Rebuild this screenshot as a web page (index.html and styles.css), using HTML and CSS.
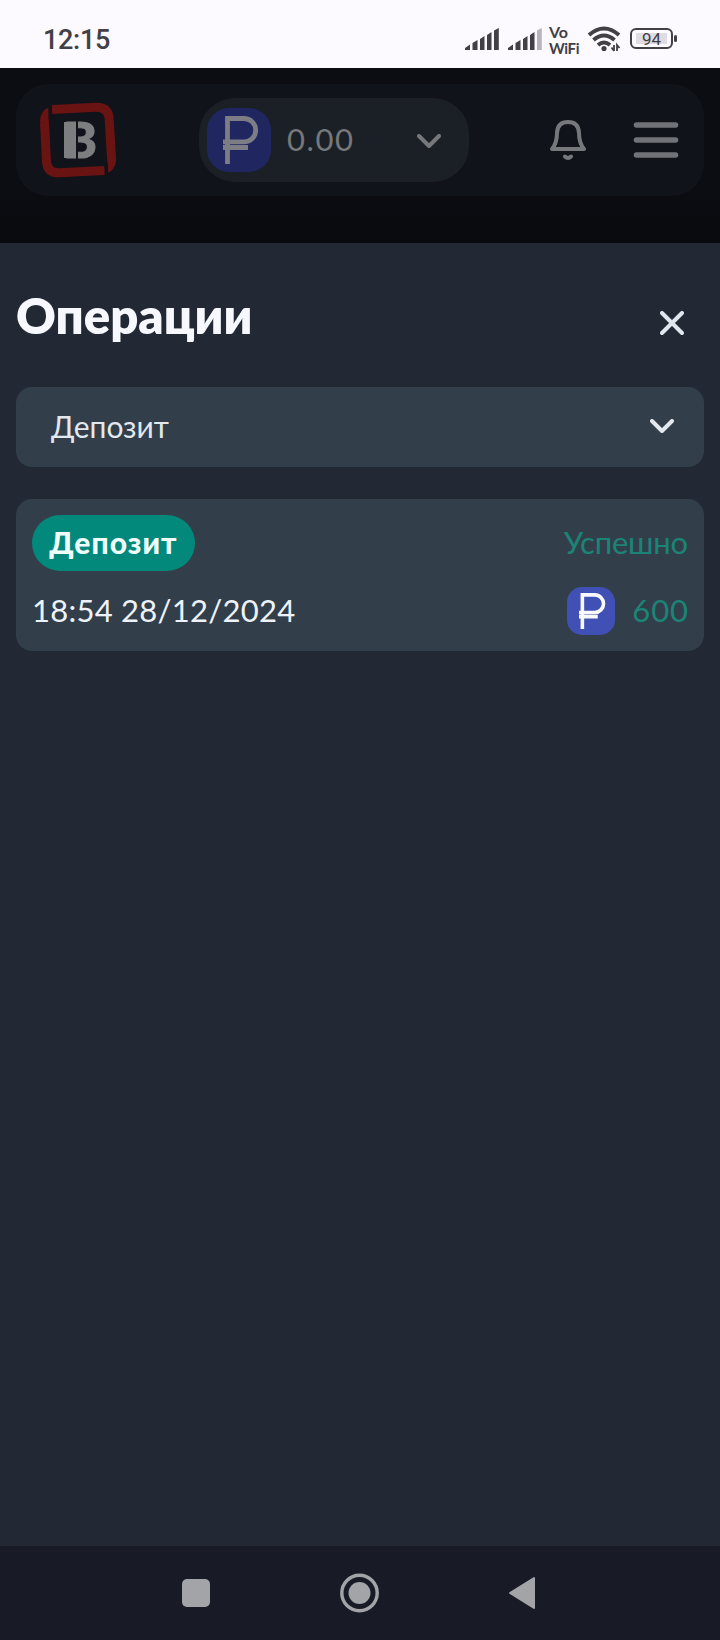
FILE: index.html
```html
<!DOCTYPE html>
<html lang="ru">
<head>
<meta charset="utf-8">
<title>Операции</title>
<link rel="stylesheet" href="styles.css">
</head>
<body>
<svg class="defs" width="0" height="0">
  <symbol id="ruble" viewBox="0 0 64 64">
    <path d="M20.500 56V10.500H37a11.700 11.700 0 0 1 0 23.400H16M16 39.500H41" fill="none" stroke="currentColor" stroke-width="4.800"/>
  </symbol>
  <symbol id="chevron" viewBox="0 0 24 14">
    <path d="M2 2l10 10L22 2" fill="none" stroke="currentColor" stroke-width="4" stroke-linecap="round" stroke-linejoin="round"/>
  </symbol>
</svg>
<div class="phone">
  <div class="status">
    <span class="clock">12:15</span>
    <div class="status-icons">
      <svg class="signal" width="35" height="24" viewBox="0 0 35 24"><path d="M0 22V20L5 16.500V22ZM7.500 22V15L12.500 12V22ZM15 22V11L19.500 8V22ZM22 22V7L26.500 4V22ZM29 22V2.500L33.800 0V22Z"/></svg>
      <svg class="signal signal-2" width="35" height="24" viewBox="0 0 35 24"><path d="M0 22V20L5 16.500V22ZM7.500 22V15L12.500 12V22ZM15 22V11L19.500 8V22ZM22 22V7L26.500 4V22Z"/><path class="faint" d="M29 22V2.500L33.800 0V22Z"/></svg>
      <div class="vowifi"><span>Vo</span><span class="wf">WiFi</span></div>
      <svg class="wifi" width="34" height="26" viewBox="0 0 34 26">
        <g fill="none" stroke="#414045" stroke-width="4"><path d="M2 9Q17-4 32 9M6.500 14Q17 5 27.500 14M11 19Q17 14 23 19"/></g>
        <circle cx="17" cy="22.500" r="2.600" fill="#414045"/><path d="M27 19v6M24.500 21.500L27 25M30 25v-6L32.500 22" fill="none" stroke="#414045" stroke-width="1.800"/>
      </svg>
      <div class="battery"><span class="level">94</span></div>
    </div>
  </div>

  <header class="top">
    <div class="topbar">
      <svg class="logo" width="76" height="76" viewBox="0 0 76 76">
        <g fill="none" stroke="#691313" stroke-width="9">
          <path d="M12 7.600L56 5.200Q68.500 5 69.200 17L71.500 56"/>
          <path d="M64.500 68.400L19 70.800Q7.500 71 6.500 60L4.500 20"/>
        </g>
        <path fill="#691313" d="M0 20Q0 9 8.500 5.500V17L9 20ZM67 56L76 55Q77 66 68 71Z"/>
        <path fill="none" stroke="#10131a" stroke-width="3" d="M10 3L10.500 14M66.300 61L67 74"/>
        <text x="23" y="55.500" class="logo-letter" textLength="34" lengthAdjust="spacingAndGlyphs">B</text>
        <rect x="24" y="20" width="12" height="36" fill="#7d7e80"/>
        <path d="M37 19V57" stroke="#10131a" stroke-width="2"/>
        <circle cx="39.500" cy="31" r="3" fill="#10131a"/><circle cx="41" cy="44.500" r="3" fill="#10131a"/>
      </svg>
      <div class="wallet">
        <svg class="coin coin-dim" width="64" height="64"><use href="#ruble"/></svg>
        <span class="balance">0.00</span>
        <svg class="chev-dim" width="24" height="14"><use href="#chevron"/></svg>
      </div>
      <svg class="bell" width="36" height="41" viewBox="0 0 36 41" fill="none" stroke="#77787c" stroke-width="4" stroke-linecap="round" stroke-linejoin="round">
        <path d="M2 29Q7 23 7 13Q7.500 2 18 2T29 13Q29 23 34 29Z"/><path d="M15 36.500Q18 39.500 21 36.500"/>
      </svg>
      <svg class="menu" width="46" height="38" viewBox="0 0 46 38"><path d="M3.500 4H42.500M3.500 19H42.500M3.500 34H42.500" stroke="#727378" stroke-width="5.600" stroke-linecap="round"/></svg>
    </div>
  </header>

  <main class="sheet">
    <div class="sheet-head">
      <h1 class="title">Операции</h1>
      <svg class="close" width="24" height="24" viewBox="0 0 24 24"><path d="M2 2L22 22M22 2L2 22" stroke="#e2e6ef" stroke-width="4" stroke-linecap="round"/></svg>
    </div>
    <div class="select">
      <span class="select-text">Депозит</span>
      <svg width="24" height="14"><use href="#chevron"/></svg>
    </div>
    <section class="operation">
      <div class="row row-top">
        <span class="badge">Депозит</span>
        <span class="state">Успешно</span>
      </div>
      <div class="row row-bottom">
        <span class="date">18:54 28/12/2024</span>
        <div class="sum">
          <svg class="coin" width="48" height="48"><use href="#ruble"/></svg>
          <span class="amount">600</span>
        </div>
      </div>
    </section>
  </main>

  <nav class="nav">
    <svg width="28" height="28"><rect width="28" height="28" rx="5" fill="#a3a4a8"/></svg>
    <svg width="40" height="40"><circle cx="20.500" cy="20" r="17.700" fill="none" stroke="#a3a4a8" stroke-width="3.400"/><circle cx="20.500" cy="20" r="11" fill="#a3a4a8"/></svg>
    <svg width="28" height="34"><path d="M2 17L26 2V32Z" fill="#a3a4a8" stroke="#a3a4a8" stroke-width="2" stroke-linejoin="round"/></svg>
  </nav>
</div>
</body>
</html>
```
FILE: styles.css
```css
* { box-sizing: border-box; }
body { margin: 0; font-family: Lato, "Open Sans", sans-serif; }
svg { display: block; flex: none; }
.defs { position: absolute; }
.phone { width: 720px; height: 1640px; display: flex; flex-direction: column; background: #222934; white-space: nowrap; }
.status { height: 68px; flex: none; background: #fcf9ff; display: flex; justify-content: space-between; padding: 0 43px; color: #414045; }
.clock { font: 500 27px/80px Roboto, sans-serif; letter-spacing: -0.3px; }
.status-icons { display: flex; padding-top: 24px; }
.signal { margin: 4px 8px 0 0; fill: #414045; }
.signal-2 { margin-right: 6px; }
.faint { fill: #b7b4bb; }
.vowifi { width: 31px; display: flex; flex-direction: column; font: 700 16px/16px Lato, sans-serif; margin-right: 7px; }
.wf { font-size: 15px; letter-spacing: -0.4px; }
.wifi { margin: 2px 9px 0 0; }
.battery { width: 43px; height: 21px; margin-top: 4px; border: 2px solid #414045; border-radius: 6px; padding: 3px 4px; margin-right: 4px; position: relative; }
.battery::after { content: ""; position: absolute; right: -6px; top: 5px; width: 3px; height: 7px; border-radius: 2px; background: #414045; }
.level { display: block; height: 11px; background: #dfdce3; font: 400 17px/12px Roboto, sans-serif; text-align: center; }
.top { height: 175px; flex: none; padding: 16px; background: linear-gradient(#0b0d12 70%, #090a0d); }
.topbar { height: 112px; border-radius: 32px; background: #10131a; display: flex; align-items: center; padding: 0 25px 0 24px; }
.logo { margin-right: 83px; }
.logo-letter { font: 900 49px Lato, sans-serif; fill: #7d7e80; stroke: #7d7e80; stroke-width: 1px; }
.wallet { width: 270px; height: 84px; border-radius: 36px; background: #1a2025; display: flex; align-items: center; padding: 0 28px 0 8px; color: #77787b; }
.coin { background: #4150b5; border-radius: 15px; color: #f8f9ff; }
.coin-dim { background: #202760; color: #7c7d85; border-radius: 22px; }
.balance { font-size: 31px; line-height: 40px; flex: 1; padding: 0 0 3px 16px; letter-spacing: 1.6px; }
.chev-dim { margin-top: 2px; }
.bell { margin-left: 81px; }
.menu { margin-left: auto; }
.sheet { flex: 1; padding: 38px 16px 0; }
.sheet-head { display: flex; justify-content: space-between; height: 106px; padding-right: 20px; }
.title { margin: 0; font-size: 49px; line-height: 68px; font-weight: 800; color: #f6f8fd; }
.close { margin-top: 30px; }
.select { height: 80px; border-radius: 16px; background: #323f4a; display: flex; align-items: center; justify-content: space-between; padding: 0 30px 2px 35px; color: #e3e8ee; font-size: 30px; }
.operation { height: 152px; margin-top: 32px; padding: 16px; border-radius: 16px; background: #323f4a; font-size: 31px; }
.row { display: flex; justify-content: space-between; align-items: center; }
.row-bottom { margin-top: 16px; height: 48px; }
.badge { width: 163px; height: 56px; border-radius: 28px; background: #02897b; color: #effffb; font-weight: 900; font-size: 30px; letter-spacing: 1.1px; line-height: 55px; text-align: center; }
.state, .amount { color: #1c8477; padding-bottom: 3px; }
.state { letter-spacing: -0.2px; }
.amount { letter-spacing: 0.9px; margin-right: -1px; }
.date { color: #eef3fb; padding-bottom: 3px; letter-spacing: 0.25px; }
.sum { display: flex; align-items: center; gap: 17px; }
.nav { height: 94px; flex: none; background: #181a25; display: flex; align-items: center; justify-content: space-between; padding: 0 184px 0 182px; }
```
